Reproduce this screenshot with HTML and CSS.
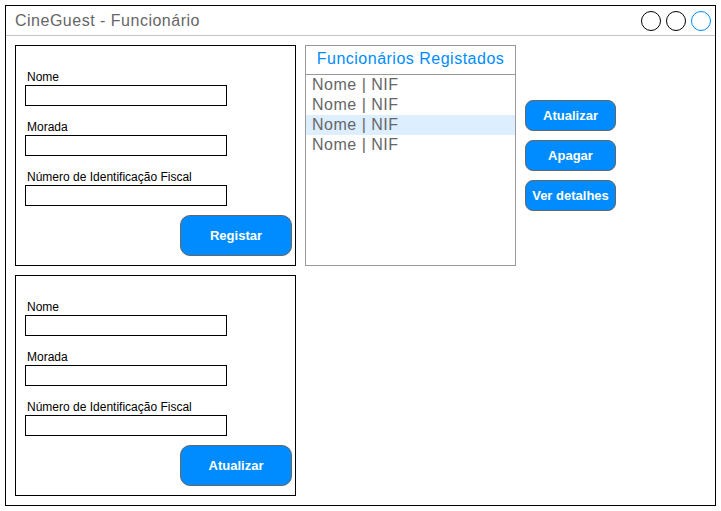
FILE: index.html
```html
<!DOCTYPE html>
<html>
<head>
    <title>CineGuest - Funcionário</title>
    <link rel="stylesheet" href="styles.css">
</head>
<body>
    <div class="window">
        <div class="titlebar">
            <span class="title">CineGuest - Funcionário</span>
            <div class="controls">
                <span class="circle"></span>
                <span class="circle"></span>
                <span class="circle blue"></span>
            </div>
        </div>
        <div class="content">
            <div class="left">
                <div class="panel">
                    <label class="label">Nome</label>
                    <input class="field" type="text">
                    <label class="label">Morada</label>
                    <input class="field" type="text">
                    <label class="label">Número de Identificação Fiscal</label>
                    <input class="field" type="text">
                    <button class="button big">Registar</button>
                </div>
                <div class="panel">
                    <label class="label">Nome</label>
                    <input class="field" type="text">
                    <label class="label">Morada</label>
                    <input class="field" type="text">
                    <label class="label">Número de Identificação Fiscal</label>
                    <input class="field" type="text">
                    <button class="button big">Atualizar</button>
                </div>
            </div>
            <div class="list">
                <div class="list-header">Funcionários Registados</div>
                <div class="row">Nome | NIF</div>
                <div class="row">Nome | NIF</div>
                <div class="row selected">Nome | NIF</div>
                <div class="row">Nome | NIF</div>
            </div>
            <div class="actions">
                <button class="button small">Atualizar</button>
                <button class="button small">Apagar</button>
                <button class="button small">Ver detalhes</button>
            </div>
        </div>
    </div>
</body>
</html>
```

FILE: styles.css
```css
body {
    margin: 0;
    padding: 5px;
    background-color: #fff;
    font-family: "Liberation Sans", Arial, sans-serif;
}

.window {
    box-sizing: border-box;
    width: 711px;
    height: 501px;
    border: 1px solid #000;
    display: flex;
    flex-direction: column;
}

.titlebar {
    display: flex;
    justify-content: space-between;
    align-items: center;
    height: 29px;
    border-bottom: 1px solid #c4c4c4;
    padding: 0 4px 0 9px;
}

.title {
    font-size: 16px;
    line-height: 29px;
    letter-spacing: 0.5px;
    color: #666;
}

.controls {
    display: flex;
    gap: 5px;
}

.circle {
    box-sizing: border-box;
    width: 20px;
    height: 20px;
    border: 1px solid #000;
    border-radius: 50%;
}

.circle.blue {
    border-color: #008cff;
}

.content {
    display: flex;
    align-items: flex-start;
    gap: 9px;
    padding: 9px;
}

.left {
    display: flex;
    flex-direction: column;
    gap: 9px;
}

.panel {
    box-sizing: border-box;
    width: 281px;
    height: 221px;
    border: 1px solid #000;
    padding: 24px 0 0 9px;
    display: flex;
    flex-direction: column;
    align-items: flex-start;
}

.label {
    font-size: 12px;
    line-height: 14px;
    color: #000;
    padding-left: 2px;
    margin-bottom: 1px;
}

.field {
    box-sizing: border-box;
    width: 202px;
    height: 21px;
    border: 1px solid #000;
    margin: 0 0 14px 0;
    padding: 0;
}

.panel .field:last-of-type {
    margin-bottom: 9px;
}

.button {
    box-sizing: border-box;
    background-color: #008cff;
    border: 1px solid #666;
    color: #fff;
    font-family: "Liberation Sans", Arial, sans-serif;
    font-weight: bold;
    font-size: 13px;
    padding: 0;
    cursor: pointer;
}

.button.big {
    width: 112px;
    height: 41px;
    border-radius: 10px;
    align-self: flex-end;
    margin-right: 3px;
}

.list {
    box-sizing: border-box;
    width: 211px;
    height: 221px;
    border: 1px solid #999;
}

.list-header {
    font-size: 16px;
    line-height: 26px;
    letter-spacing: 0.5px;
    padding-bottom: 2px;
    text-align: center;
    color: #008cff;
    border-bottom: 1px solid #999;
}

.row {
    font-size: 16px;
    line-height: 20px;
    letter-spacing: 0.5px;
    color: #666;
    padding-left: 6px;
}

.row.selected {
    background-color: #ddeeff;
}

.actions {
    display: flex;
    flex-direction: column;
    gap: 9px;
    margin-top: 55px;
}

.button.small {
    width: 91px;
    height: 31px;
    border-radius: 8px;
}
```
